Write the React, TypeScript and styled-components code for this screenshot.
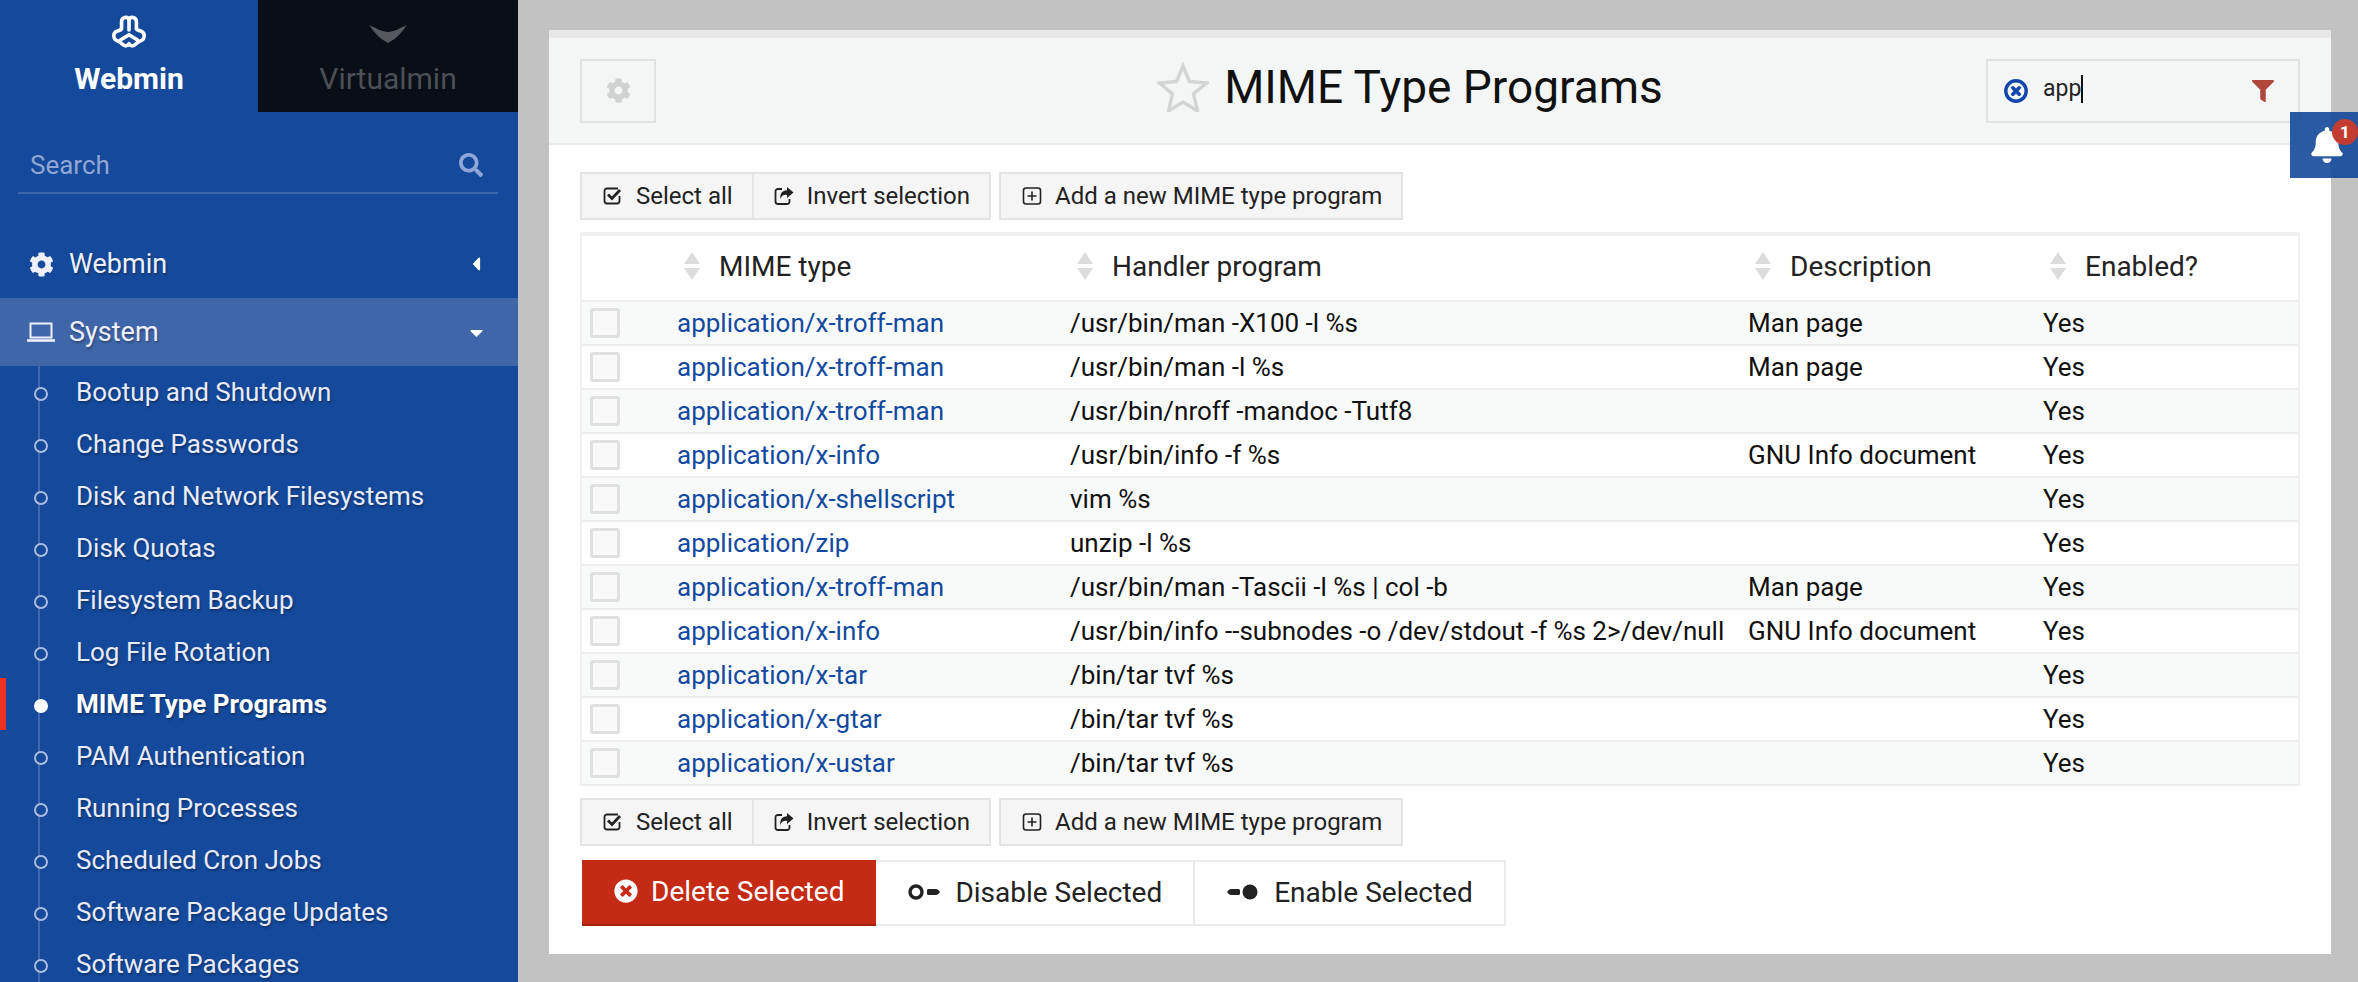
import React from 'react'
import styled, { createGlobalStyle } from 'styled-components'
import {
  FaCog,
  FaSearch,
  FaCaretLeft,
  FaCaretDown,
  FaTimesCircle,
  FaFilter,
  FaBell,
} from 'react-icons/fa'

const GlobalStyle = createGlobalStyle`
  html, body {
    margin: 0;
    padding: 0;
    background: #c1c2c1;
  }
  * {
    box-sizing: border-box;
  }
`

const menuItems = [
  'Bootup and Shutdown',
  'Change Passwords',
  'Disk and Network Filesystems',
  'Disk Quotas',
  'Filesystem Backup',
  'Log File Rotation',
  'MIME Type Programs',
  'PAM Authentication',
  'Running Processes',
  'Scheduled Cron Jobs',
  'Software Package Updates',
  'Software Packages',
]

const rows = [
  ['application/x-troff-man', '/usr/bin/man -X100 -l %s', 'Man page'],
  ['application/x-troff-man', '/usr/bin/man -l %s', 'Man page'],
  ['application/x-troff-man', '/usr/bin/nroff -mandoc -Tutf8', ''],
  ['application/x-info', '/usr/bin/info -f %s', 'GNU Info document'],
  ['application/x-shellscript', 'vim %s', ''],
  ['application/zip', 'unzip -l %s', ''],
  ['application/x-troff-man', '/usr/bin/man -Tascii -l %s | col -b', 'Man page'],
  ['application/x-info', '/usr/bin/info --subnodes -o /dev/stdout -f %s 2>/dev/null', 'GNU Info document'],
  ['application/x-tar', '/bin/tar tvf %s', ''],
  ['application/x-gtar', '/bin/tar tvf %s', ''],
  ['application/x-ustar', '/bin/tar tvf %s', ''],
]

const columns = ['MIME type', 'Handler program', 'Description', 'Enabled?']

const WebminLogo = () => (
  <svg width="34" height="33" viewBox="0 0 32 31" fill="none" stroke="#fff" strokeWidth="3.4" strokeLinejoin="round" strokeLinecap="round">
    <path d="M9 13V6.500C9 1.500 15 1 16 4.500 17 1 23 1.500 23 6.500V13c.5 1 2 1.500 4 2 3.500 1 4 4.500 2.500 7.500-1 1.500-3 2-5 3-2 1.500-3.500 3.500-5.500 3.500-1.500 0-2-1-3-2-1 1-1.500 2-3 2-2 0-3.500-2-5.500-3.500-2-1-4-1.500-5-3C1 19.500 1.500 16 5 15c2-.5 3.500-1 4-2z" />
    <path d="M16 4.500V14M8 23.500l8-5 8 5" />
  </svg>
)

const VirtualminLogo = () => (
  <svg width="40" height="20" viewBox="0 0 40 20">
    <path d="M1 1c7 3 13 7 19 7s12-4 19-7c-5 7-11 14-19 18C12 15 6 8 1 1z" fill="#55585d" />
  </svg>
)

const LaptopIcon = () => (
  <svg width="28" height="20" viewBox="0 0 28 20" fill="none" stroke="#eef0fb" strokeWidth="2">
    <rect x="3.500" y="1.500" width="21" height="14" />
    <path d="M0 18.500h28" strokeWidth="2.600" />
  </svg>
)

const StarIcon = () => (
  <svg width="52" height="50" viewBox="0 0 52 50" fill="none" stroke="#d3d5d4" strokeWidth="3.500">
    <path d="M26 4l6.500 15.500 17 1.500-13 11 4 17L26 40 11.500 49l4-17-13-11 17-1.500z" />
  </svg>
)

const ClearIcon = () => (
  <svg width="24" height="24" viewBox="0 0 24 24" fill="none" stroke="#1246ac">
    <circle cx="12" cy="12" r="10.200" strokeWidth="3.400" />
    <path d="M8.800 8.800l6.400 6.400M15.200 8.800l-6.400 6.400" strokeWidth="3.600" strokeLinecap="round" />
  </svg>
)

const SelectIcon = () => (
  <svg width="20" height="20" viewBox="0 0 20 20" fill="none" stroke="#222">
    <path d="M15 2.500H4A2.500 2.500 0 0 0 1.500 5v10A2.500 2.500 0 0 0 4 17.500h10a2.500 2.500 0 0 0 2.500-2.500v-5" strokeWidth="1.800" />
    <path d="M5 8.500l4 4 8-8.500" strokeWidth="2.800" />
  </svg>
)

const InvertIcon = () => (
  <svg width="20" height="20" viewBox="0 0 20 20">
    <path d="M8 3H4A2.500 2.500 0 0 0 1.500 5.500v10A2.500 2.500 0 0 0 4 18h9a2.500 2.500 0 0 0 2.500-2.500V13" fill="none" stroke="#222" strokeWidth="1.800" />
    <path d="M13 1l6.500 5.500L13 12V8.800c-4 0-6 1.200-6.500 4.700C5.500 8 8 4.500 13 4.300z" fill="#222" />
  </svg>
)

const PlusIcon = () => (
  <svg width="20" height="20" viewBox="0 0 20 20" fill="none" stroke="#222" strokeWidth="1.600">
    <rect x="1.500" y="2" width="17" height="16" rx="2.500" />
    <path d="M10 5.500v9M5.500 10h9" />
  </svg>
)

const DisableIcon = () => (
  <svg width="32" height="16" viewBox="0 0 32 16" fill="none">
    <circle cx="8" cy="8" r="6" stroke="#222" strokeWidth="3.400" />
    <path d="M20.500 5H28c1.500 0 3 1.500 4 3-1 1.500-2.500 3-4 3h-7.500a1.500 1.500 0 0 1-1.500-1.500v-3A1.500 1.500 0 0 1 20.500 5z" fill="#222" />
  </svg>
)

const EnableIcon = () => (
  <svg width="32" height="16" viewBox="0 0 32 16">
    <path d="M11.500 5H4C2.500 5 1 6.500 0 8c1 1.500 2.500 3 4 3h7.500a1.500 1.500 0 0 0 1.500-1.500v-3A1.500 1.500 0 0 0 11.500 5z" fill="#222" />
    <circle cx="23" cy="8" r="7.500" fill="#222" />
  </svg>
)

const SortIcon = () => (
  <svg width="18" height="28" viewBox="0 0 18 28" fill="#dcdcdc">
    <path d="M9 0l8 12H1zM1 16h16L9 28z" />
  </svg>
)

const Toolbar = () => (
  <ActionRow>
    <ButtonGroup>
      <ToolButton><SelectIcon />Select all</ToolButton>
      <ToolButton><InvertIcon />Invert selection</ToolButton>
    </ButtonGroup>
    <ButtonGroup>
      <ToolButton><PlusIcon />Add a new MIME type program</ToolButton>
    </ButtonGroup>
  </ActionRow>
)

export default function App() {
  return (
    <Page>
      <GlobalStyle />
      <Sidebar>
        <Tabs>
          <Tab $active>
            <WebminLogo />
            <TabLabel>Webmin</TabLabel>
          </Tab>
          <Tab>
            <VirtualminLogo />
            <TabLabel>Virtualmin</TabLabel>
          </Tab>
        </Tabs>
        <SearchRow>
          <span>Search</span>
          <FaSearch />
        </SearchRow>
        <MenuHead>
          <MenuIcon><FaCog size={25} /></MenuIcon>
          <MenuTitle>Webmin</MenuTitle>
          <Caret><FaCaretLeft size={22} /></Caret>
        </MenuHead>
        <MenuHead $open>
          <MenuIcon><LaptopIcon /></MenuIcon>
          <MenuTitle>System</MenuTitle>
          <Caret><FaCaretDown size={21} /></Caret>
        </MenuHead>
        <SubMenu>
          {menuItems.map(item => (
            <SubItem key={item} $current={item === 'MIME Type Programs'}>
              {item}
            </SubItem>
          ))}
        </SubMenu>
      </Sidebar>
      <Main>
        <Panel>
          <PanelHeader>
            <GearButton><FaCog size={25} /></GearButton>
            <Title>
              <StarIcon />
              <span>MIME Type Programs</span>
            </Title>
            <FilterBox>
              <ClearIcon />
              <FilterText>app<FilterCaret /></FilterText>
              <FilterMark><FaFilter size={22} /></FilterMark>
            </FilterBox>
          </PanelHeader>
          <PanelBody>
            <Toolbar />
            <Table>
              <HeaderRow>
                <span />
                {columns.map(col => (
                  <HeaderCell key={col}>
                    <SortIcon />
                    {col}
                  </HeaderCell>
                ))}
              </HeaderRow>
              {rows.map((row, i) => (
                <Row key={i} $odd={i % 2 === 0}>
                  <CheckCell><Check /></CheckCell>
                  <LinkCell>{row[0]}</LinkCell>
                  <Cell>{row[1]}</Cell>
                  <Cell>{row[2]}</Cell>
                  <Cell>Yes</Cell>
                </Row>
              ))}
            </Table>
            <Toolbar />
            <SubmitRow>
              <DeleteButton><FaTimesCircle size={24} />Delete Selected</DeleteButton>
              <SubmitButton><DisableIcon />Disable Selected</SubmitButton>
              <SubmitButton><EnableIcon />Enable Selected</SubmitButton>
            </SubmitRow>
          </PanelBody>
        </Panel>
      </Main>
      <BellTab>
        <FaBell size={36} />
        <BellBadge>1</BellBadge>
      </BellTab>
    </Page>
  )
}

const Page = styled.div`
  position: relative;
  display: flex;
  width: 2358px;
  height: 982px;
  overflow: hidden;
  background: #c1c2c1;
  font-family: 'Roboto', sans-serif;
`

const Sidebar = styled.aside`
  flex: 0 0 518px;
  height: 982px;
  overflow: hidden;
  background: #14499b;
`

const Tabs = styled.div`
  display: grid;
  grid-template-columns: 258px 260px;
  height: 112px;
`

const Tab = styled.div<{ $active?: boolean }>`
  display: flex;
  flex-direction: column;
  align-items: center;
  padding-top: ${props => (props.$active ? '15px' : '24px')};
  gap: ${props => (props.$active ? '14px' : '18px')};
  height: 112px;
  background: ${props => (props.$active ? '#14499b' : '#0a0e16')};
  color: ${props => (props.$active ? '#fff' : '#4b4f55')};
  font-weight: ${props => (props.$active ? 700 : 400)};
`

const TabLabel = styled.div`
  font-size: 30px;
  line-height: 34px;
`

const SearchRow = styled.div`
  display: flex;
  align-items: center;
  justify-content: space-between;
  height: 50px;
  margin: 32px 20px 0 18px;
  padding: 0 15px 6px 12px;
  border-bottom: 2px solid #3a65aa;
  color: #8fa6d6;
  font-size: 26px;
  svg {
    width: 24px;
    height: 24px;
  }
`

const MenuHead = styled.div<{ $open?: boolean }>`
  display: flex;
  align-items: center;
  height: 68px;
  margin-top: ${props => (props.$open ? 0 : '36px')};
  padding: 0 31px 0 27px;
  background: ${props => (props.$open ? '#4066aa' : 'transparent')};
  color: #eef0fb;
`

const MenuIcon = styled.span`
  display: flex;
  justify-content: center;
  width: 28px;
  margin-right: 14px;
`

const MenuTitle = styled.span`
  flex: 1;
  font-size: 27px;
  text-shadow: 1px 2px 2px rgba(0, 0, 0, 0.3);
`

const Caret = styled.span`
  display: flex;
  color: #fff;
`

const SubMenu = styled.ul`
  position: relative;
  margin: 0;
  padding: 0;
  list-style: none;
  &::before {
    content: '';
    position: absolute;
    left: 38px;
    top: 0;
    bottom: 0;
    width: 2px;
    background: #4369ac;
  }
`

const SubItem = styled.li<{ $current?: boolean }>`
  position: relative;
  height: 52px;
  padding-left: 76px;
  line-height: 52px;
  font-size: 26px;
  font-weight: ${props => (props.$current ? 700 : 400)};
  color: ${props => (props.$current ? '#fff' : '#e9ebfa')};
  text-shadow: 1px 2px 2px rgba(0, 0, 0, 0.3);
  &::before {
    content: '';
    position: absolute;
    left: 34px;
    top: 21px;
    width: 10px;
    height: 10px;
    border-radius: 50%;
    border: 2px solid ${props => (props.$current ? '#fff' : '#a9bbdf')};
    background: ${props => (props.$current ? '#fff' : '#14499b')};
  }
  &::after {
    content: '';
    display: ${props => (props.$current ? 'block' : 'none')};
    position: absolute;
    left: 0;
    top: 0;
    width: 6px;
    height: 52px;
    background: #ee3124;
  }
`

const Main = styled.main`
  flex: 1;
  padding: 30px 27px 28px 31px;
`

const Panel = styled.div`
  height: 924px;
  background: #fff;
  border-top: 8px solid #e8e8e8;
`

const PanelHeader = styled.header`
  display: grid;
  grid-template-columns: 76px 1fr 314px;
  align-items: center;
  height: 107px;
  padding: 0 31px;
  background: #f4f6f5;
  border-bottom: 2px solid #e9ebea;
`

const GearButton = styled.div`
  display: flex;
  align-items: center;
  justify-content: center;
  height: 64px;
  color: #d0d2d1;
  border: 2px solid #e0e2e1;
`

const Title = styled.h1`
  display: flex;
  align-items: center;
  justify-content: center;
  gap: 15px;
  margin: 0;
  padding: 0 0 8px 178px;
  font-size: 46px;
  font-weight: 400;
  color: #111;
`

const FilterBox = styled.div`
  display: flex;
  align-items: center;
  height: 64px;
  padding: 0 24px 0 16px;
  border: 2px solid #e0e2e1;
`

const FilterText = styled.span`
  flex: 1;
  display: flex;
  align-items: center;
  margin-left: 15px;
  padding-bottom: 4px;
  font-size: 23px;
  color: #222;
`

const FilterCaret = styled.i`
  width: 2px;
  height: 28px;
  background: #111;
`

const FilterMark = styled.span`
  display: flex;
  color: #b0463c;
`

const PanelBody = styled.div`
  padding: 27px 31px 0;
`

const ActionRow = styled.div`
  display: flex;
  gap: 8px;
`

const ButtonGroup = styled.div`
  display: flex;
  height: 48px;
  background: #f5f5f5;
  border: 2px solid #e4e4e4;
`

const ToolButton = styled.div`
  display: flex;
  align-items: center;
  gap: 13px;
  padding: 0 19px 0 21px;
  font-size: 24px;
  color: #222;
  & + & {
    border-left: 2px solid #e4e4e4;
    padding-left: 20px;
  }
`

const Table = styled.div`
  margin: 12px 0;
  border: 2px solid #eff0ef;
  border-top-width: 4px;
  border-bottom: 0;
`

const columnsTemplate = '83px 393px 678px 295px 1fr'

const HeaderRow = styled.div`
  display: grid;
  grid-template-columns: ${columnsTemplate};
  height: 66px;
  align-items: center;
  background: #fff;
  border-bottom: 2px solid #eceeee;
`

const HeaderCell = styled.div`
  display: flex;
  align-items: center;
  gap: 18px;
  padding: 0 0 4px 18px;
  font-size: 28px;
  color: #222;
`

const Row = styled.div<{ $odd: boolean }>`
  display: grid;
  grid-template-columns: ${columnsTemplate};
  height: 44px;
  align-items: center;
  background: ${props => (props.$odd ? '#f8faf9' : '#fff')};
  border-bottom: 2px solid #eceeee;
`

const CheckCell = styled.div`
  padding-left: 8px;
`

const Check = styled.div`
  width: 30px;
  height: 30px;
  background: #f9f9f9;
  border: 3px solid #dfe0df;
  border-radius: 3px;
`

const Cell = styled.div`
  padding-left: 12px;
  font-size: 26px;
  color: #111;
  white-space: nowrap;
`

const LinkCell = styled(Cell)`
  color: #134a9f;
`

const SubmitRow = styled.div`
  display: flex;
  height: 66px;
  margin-top: 14px;
  margin-left: 2px;
`

const SubmitButton = styled.div`
  display: flex;
  align-items: center;
  gap: 15px;
  padding: 0 31px 2px 32px;
  font-size: 28px;
  color: #222;
  background: #fff;
  border: 2px solid #ebebeb;
  border-left-width: 0;
`

const DeleteButton = styled(SubmitButton)`
  gap: 13px;
  padding: 0 32px 2px;
  color: #fff;
  background: #c52a15;
  border: 0;
  border-bottom: 2px solid #a62310;
`

const BellTab = styled.div`
  position: absolute;
  top: 112px;
  right: 0;
  display: flex;
  align-items: center;
  padding-left: 19px;
  width: 68px;
  height: 66px;
  background: rgba(20, 73, 155, 0.9);
  color: #fff;
`

const BellBadge = styled.span`
  position: absolute;
  top: 7px;
  right: 0;
  width: 26px;
  height: 26px;
  border-radius: 50%;
  background: #c23c32;
  color: #fff;
  font-size: 17px;
  font-weight: 700;
  line-height: 26px;
  text-align: center;
`
